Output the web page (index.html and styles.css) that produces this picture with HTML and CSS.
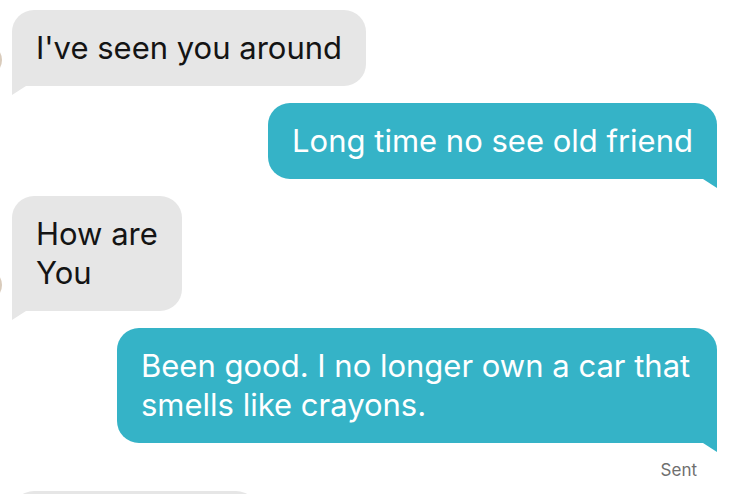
FILE: index.html
```html
<!DOCTYPE html>
<html lang="en">
<head>
    <meta charset="UTF-8">
    <meta name="viewport" content="width=device-width, initial-scale=1.0">
    <link rel="stylesheet" href="styles.css">
    <title>Messages</title>
</head>
<body>

<div class="thread">
    <div class="row row-in">
        <div class="avatar"></div>
        <div class="bubble bubble-in">I've seen you around</div>
    </div>

    <div class="row row-out">
        <div class="bubble bubble-out">Long time no see old friend</div>
    </div>

    <div class="row row-in">
        <div class="avatar"></div>
        <div class="bubble bubble-in">How are<br>You</div>
    </div>

    <div class="row row-out">
        <div class="bubble bubble-out wide">Been good. I no longer own a car that smells like crayons.</div>
    </div>

    <div class="status">Sent</div>

    <div class="row row-in">
        <div class="bubble bubble-in next"></div>
    </div>
</div>

</body>
</html>
```

FILE: styles.css
```css
body {
    margin: 0;
    padding: 0;
    background: #fff;
    font-family: Inter, "Noto Sans", sans-serif;
    overflow: hidden;
    height: 494px;
}

.thread {
    display: flex;
    flex-direction: column;
    gap: 17px;
    padding: 10px 17px 0 12px;
}

.row {
    display: flex;
    align-items: flex-end;
}

.row-out {
    justify-content: flex-end;
}

.avatar {
    width: 32px;
    height: 32px;
    border-radius: 50%;
    background: #d9cbbb;
    margin-left: -42px;
    margin-right: 10px;
    margin-bottom: 10px;
    flex-shrink: 0;
}

.bubble {
    position: relative;
    padding: 18px 24px 19px;
    border-radius: 22px;
    font-size: 31px;
    line-height: 39px;
}

.bubble::after {
    content: "";
    position: absolute;
    top: 100%;
    width: 14px;
    height: 9px;
    background: inherit;
}

.bubble-in {
    background: #e6e6e6;
    color: #141414;
    border-bottom-left-radius: 0;
}

.bubble-in::after {
    left: 0;
    clip-path: polygon(0 0, 100% 0, 0 100%);
}

.bubble-out {
    background: #35b3c7;
    color: #fff;
    border-bottom-right-radius: 0;
}

.bubble-out::after {
    right: 0;
    clip-path: polygon(0 0, 100% 0, 100% 100%);
}

.wide {
    max-width: 552px;
}

.status {
    align-self: flex-end;
    margin: 0 20px 0 0;
    font-size: 17px;
    line-height: 20px;
    color: #6f6f6f;
}

.next {
    width: 198px;
    height: 40px;
    margin-top: -6px;
}
```
